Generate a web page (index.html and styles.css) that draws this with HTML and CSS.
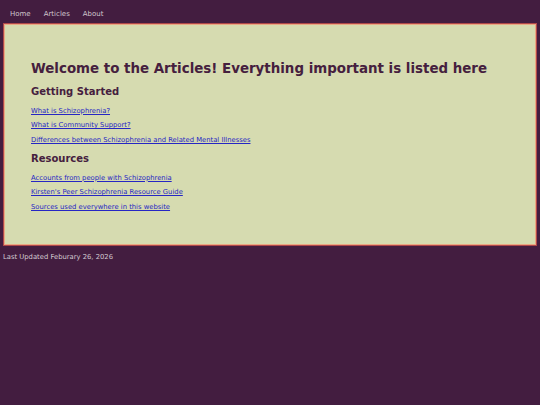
FILE: index.html
```html
<!DOCTYPE html>
<html>
<head>
<meta charset="utf-8">
<link rel="stylesheet" href="styles.css">
</head>
<body>
<nav class="topnav">
  <a href="#">Home</a>
  <a href="#">Articles</a>
  <a href="#">About</a>
</nav>
<main class="panel">
  <h1 class="title">Welcome to the Articles! Everything important is listed here</h1>
  <h2 class="section first">Getting Started</h2>
  <ul class="links">
    <li><a href="#">What is Schizophrenia?</a></li>
    <li><a href="#">What is Community Support?</a></li>
    <li><a href="#">Differences between Schizophrenia and Related Mental Illnesses</a></li>
  </ul>
  <h2 class="section">Resources</h2>
  <ul class="links">
    <li><a href="#">Accounts from people with Schizophrenia</a></li>
    <li><a href="#">Kirsten's Peer Schizophrenia Resource Guide</a></li>
    <li><a href="#">Sources used everywhere in this website</a></li>
  </ul>
</main>
<footer class="foot">Last Updated Feburary 26, 2026</footer>
</body>
</html>
```

FILE: styles.css
```css
html, body {
  margin: 0;
  padding: 0;
  background: #431d40;
  font-family: "DejaVu Sans", Verdana, sans-serif;
}
.topnav {
  display: flex;
  gap: 13px;
  padding: 10px 10px 0;
  height: 13px;
  font-size: 7px;
}
.topnav a {
  color: #cfc6cd;
  text-decoration: none;
}
.panel {
  margin: 0 3px;
  background: #d6dbb0;
  border: 1px solid #b0484a;
  box-shadow: inset 0 0 0 1px #eaa882;
  padding: 35px 27px 30px;
}
.title {
  margin: 0;
  font-size: 13.4px;
  color: #45203e;
  line-height: 20px;
}
.section {
  margin: 4px 0 4.5px;
  font-size: 10px;
  line-height: 14px;
  color: #45203e;
}
.section.first {
  margin-top: 6px;
}
.links {
  list-style: none;
  margin: 0;
  padding: 0;
  font-size: 6.8px;
  line-height: 15px;
}
.links li:nth-child(n+2) {
  margin-top: -0.25px;
}
.links a {
  color: #2626c4;
}
.foot {
  padding: 6px 3px;
  font-size: 6.8px;
  line-height: 10px;
  color: #d3cad0;
}
```
